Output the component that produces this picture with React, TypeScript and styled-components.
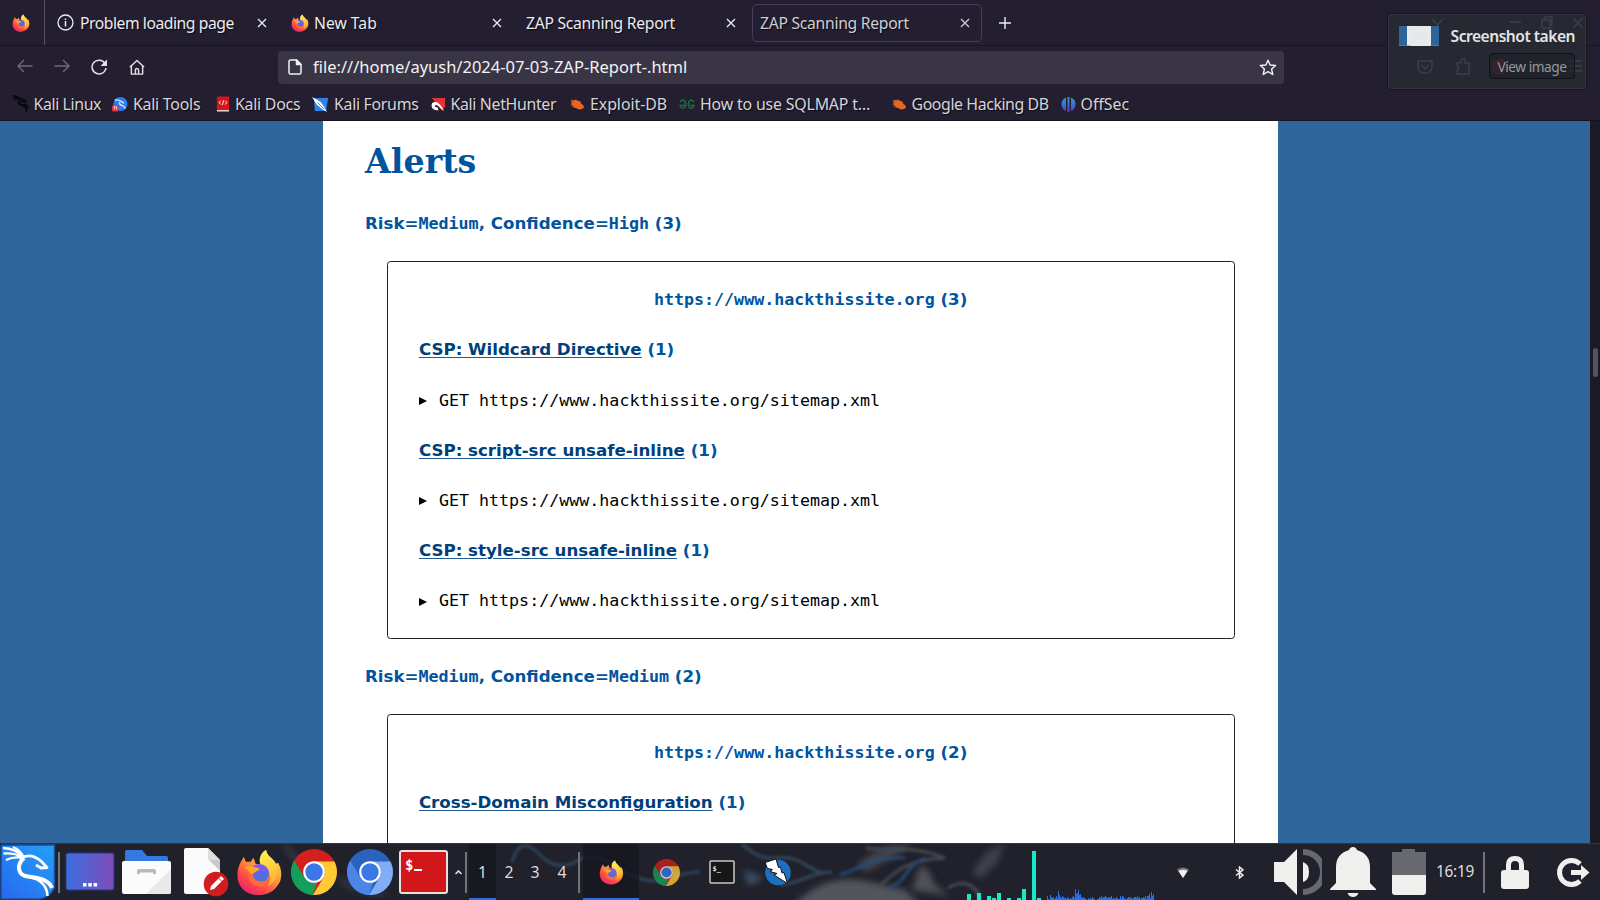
import React from "react";
import styled, { createGlobalStyle } from "styled-components";

const Global = createGlobalStyle`
  * { box-sizing: border-box; }
  body { margin: 0; overflow: hidden; background: #241f31; font-family: "Noto Sans", sans-serif; }
`;
const Screen = styled.div`
  width: 1600px; height: 900px; display: flex; flex-direction: column; overflow: hidden; position: relative;
`;

/* ---------- browser chrome ---------- */
const TabBar = styled.div`
  height: 46px; flex: none; display: flex; background: #241f30; border-bottom: 1px solid #17141f; align-items: center;
`;
const PinnedTab = styled.div`
  width: 45px; height: 45px; border-right: 1px solid #56525f; display: flex; align-items: center; padding-left: 12px;
`;
const Tab = styled.div<{ $w: number; $pad: number; $end?: number; $active?: boolean }>`
  width: ${(p) => p.$w}px; height: 38px; padding-left: ${(p) => p.$pad}px; padding-right: ${(p) => p.$end ?? 11}px;
  display: flex; align-items: center; color: ${(p) => (p.$active ? "#cfcdd3" : "#ecebee")};
  border: 1px solid ${(p) => (p.$active ? "#4a3a5e" : "transparent")}; border-radius: 5px;
`;
const TabTitle = styled.span<{ $gap?: number; $ls?: number }>`
  flex: 1; font-size: 15.7px; line-height: 22px; white-space: nowrap; margin-left: ${(p) => p.$gap ?? 0}px;
  letter-spacing: ${(p) => p.$ls ?? 0}px; text-shadow: 1px 1px 1px #0c0a12;
`;
const NewTab = styled.div`width: 46px; display: flex; justify-content: center;`;

const NavBar = styled.div`
  height: 43px; flex: none; display: flex; align-items: center; background: #241f30; padding-bottom: 1px;
`;
const NavButton = styled.div<{ $dim?: boolean }>`
  width: 37.5px; display: flex; justify-content: center; color: #e4e2e8; opacity: ${(p) => (p.$dim ? 0.38 : 1)};
`;
const NavButtons = styled.div`display: flex; padding-left: 6px;`;
const UrlBar = styled.div`
  margin-left: 122px; width: 1006px; height: 33px; border-radius: 4px; background: #3a3545; color: #f2f1f5;
  display: flex; align-items: center; padding: 0 7px 0 10px;
`;
const UrlText = styled.span`flex: 1; margin-left: 11px; font-size: 16.5px; line-height: 24px; white-space: nowrap;`;

const Bookmarks = styled.div`
  height: 32px; flex: none; display: flex; align-items: center; background: #241f30; border-bottom: 1px solid #16131d;
  padding: 0 0 1px 11.5px;
`;
const Bookmark = styled.div<{ $w: number }>`
  width: ${(p) => p.$w}px; flex: none; display: flex; align-items: center; gap: 5px; white-space: nowrap;
`;
const BookmarkLabel = styled.span<{ $ls: number }>`
  color: #d6d4da; font-size: 15.9px; line-height: 22px; letter-spacing: ${(p) => p.$ls}px; text-shadow: 1px 1px 1px #0c0a12;
`;

/* ---------- report page ---------- */
const Viewport = styled.div`height: 722px; flex: none; display: flex; background: #30669b; overflow: hidden;`;
const Report = styled.main`
  margin-left: 323px; width: 954.5px; background: #fff; padding: 0 42px; color: #00549e; overflow: hidden;
  font-family: "DejaVu Sans", sans-serif; font-size: 16.66px;
`;
const Title = styled.h1`
  margin: 0; padding-top: 20px; height: 78px; font: bold 33.3px/42px "DejaVu Serif", serif;
`;
const GroupTitle = styled.h2`margin: 0; height: 50px; font-size: 16.66px; line-height: 50px; white-space: nowrap;`;
const GroupGap = styled.div<{ $h: number }>`height: ${(p) => p.$h}px;`;
const Code = styled.code`font-family: "DejaVu Sans Mono", monospace; font-size: 16.66px;`;
const Card = styled.section<{ $h?: number }>`
  margin-left: 21.5px; width: 848.5px; border: 1px solid #222; border-radius: 3.5px; padding: 13px 31.7px 12px 31.4px;
  height: ${(p) => (p.$h ? p.$h + "px" : "auto")};
`;
const Line = styled.div<{ $center?: boolean }>`
  height: 50.2px; line-height: 50.2px; white-space: nowrap; font-weight: bold;
  text-align: ${(p) => (p.$center ? "center" : "left")};
`;
const AlertLink = styled.a`
  color: #003f7a; text-decoration: underline #1d5a96; text-decoration-thickness: 1px; text-underline-offset: 1.5px;
`;
const Request = styled.div`height: 50.2px; line-height: 50.2px; display: flex; align-items: center; color: #000; gap: 12px; padding-top: 0.6px;`;
const ScrollTrack = styled.div`margin-left: auto; width: 10px; background: #1c1b25; padding: 227px 0 0 2.5px;`;
const ScrollThumb = styled.div`width: 5px; height: 29px; border-radius: 3px; background: #54525d;`;

/* ---------- notification ---------- */
const Toast = styled.div`
  position: absolute; left: 1387px; top: 13px; width: 200px; height: 77px; border-radius: 4px; background: #262932;
  border: 1px solid #16161d; box-shadow: inset 0 0 0 1px #343640; padding: 8px 11px 10px 11px;
  display: flex; flex-direction: column; align-items: flex-end; justify-content: space-between;
`;
const Ghosts = styled.svg`position: absolute; left: 0; top: 0;`;
const ToastHead = styled.div`display: flex; align-items: center; width: 100%; justify-content: space-between; position: relative; height: 28px;`;
const ToastTitle = styled.span`font-size: 15.6px; letter-spacing: -0.5px; font-weight: 600; color: #e4e4e6; white-space: nowrap; padding-bottom: 1px;`;
const ToastButton = styled.div`
  position: relative; width: 86px; height: 26px; border: 1px solid #111219; border-radius: 4px; background: rgba(30, 31, 39, 0.55);
  color: #96979c; font-size: 13.7px; letter-spacing: -0.45px; line-height: 25px; text-align: center; white-space: nowrap;
`;

/* ---------- desktop panel ---------- */
const Panel = styled.div`
  height: 57px; flex: none; display: flex; background: #20212a; position: relative; border-top: 1px solid #34353e;
`;
const Wallpaper = styled.svg`position: absolute; left: 0; top: 0;`;
const Cell = styled.div<{ $w: number; $active?: boolean; $align?: string }>`
  width: ${(p) => p.$w}px; height: 56px; flex: none; position: relative; display: flex; align-items: center;
  justify-content: ${(p) => p.$align ?? "center"};
  background: ${(p) => (p.$active ? "rgba(20,21,30,.75)" : "transparent")};
  border-bottom: ${(p) => (p.$active ? "2px solid #2f6fe4" : "0")};
  padding-top: ${(p) => (p.$active ? "2px" : "0")};
  > svg { flex: none; }
`;
const Divider = styled.div<{ $m: string }>`position: relative; flex: none; width: 2px; height: 41px; margin: ${(p) => p.$m}; background: #73747a;`;
const PanelText = styled.span<{ $size: number; $ls?: number }>`
  font-size: ${(p) => p.$size}px; letter-spacing: ${(p) => p.$ls ?? 0}px; color: #dcdcde; line-height: 24px; white-space: nowrap; padding-bottom: 1px;
`;

const Fox = ({ s }: { s: number }) => (
  <svg width={s} height={s} viewBox="0 0 46 48">
    <defs>
      <linearGradient id="foxBody" x1=".85" y1=".1" x2=".25" y2="1">
        <stop offset="0" stopColor="#ffe14a" /><stop offset=".4" stopColor="#ff9a36" /><stop offset=".72" stopColor="#ff4a46" /><stop offset="1" stopColor="#e9246f" />
      </linearGradient>
      <linearGradient id="foxTail" x1=".4" y1="0" x2=".6" y2="1"><stop offset="0" stopColor="#fff14f" /><stop offset="1" stopColor="#ffab33" /></linearGradient>
      <linearGradient id="foxGlobe" x1="0" y1="0" x2="0" y2="1"><stop offset="0" stopColor="#8158ee" /><stop offset="1" stopColor="#3a78df" /></linearGradient>
    </defs>
    <path d="M4 13 L7 8 L9 13 L14 13 L17 9 L19 15 L24 16 C23 9 26 3 30 1 C31 8 36 9 40 15 L42 14 C46 21 47 31 41 38 C33 49 15 50 6 41 C-1 34-1 22 4 13Z" fill="url(#foxBody)" />
    <path d="M29 1 C21 7 22 16 27 19 C35 22 36 31 31 38 C43 33 45 18 35 9 C31 6 30 4 29 1Z" fill="url(#foxTail)" />
    <circle cx="23" cy="25" r="9.8" fill="url(#foxGlobe)" />
    <path d="M7 19 C13 15 18 19 23 20 C23 22 19 23 17 24 C15 29 19 33 25 33 C30 33 33 30 33 26 C37 37 24 42 15 35 C10 31 10 24 13 21Z" fill="#ff683a" />
    <path d="M7 19 C13 16 19 19 23 20 C22 23 18 23 15 26 C13 24 11 21 7 19Z" fill="#ffa52f" />
  </svg>
);
const ChromeIcon = ({ s, c = ["#d2201c", "#13a05b", "#ffca34"], dim }: { s: number; c?: string[]; dim?: boolean }) => (
  <svg width={s} height={s} viewBox="0 0 46 46" opacity={dim ? 0.78 : 1}>
    <circle cx="23" cy="23" r="23" fill={c[0]} />
    <path d="M3.1 11.5 L13.5 28.5 A11 11 0 0 0 26 33.5 L22 46 A23 23 0 0 1 3.1 11.5Z" fill={c[1]} />
    <path d="M23 12.5 H43.4 A23 23 0 0 1 22 46 L32.5 28.5 A11 11 0 0 0 23 12.5Z" fill={c[2]} />
    <circle cx="23" cy="23" r="10.8" fill="#fff" /><circle cx="23" cy="23" r="8.7" fill="#3b78e6" />
  </svg>
);
const Cross = () => (
  <svg width="10" height="10" viewBox="0 0 10 10"><path d="M1 1 9 9M9 1 1 9" stroke="currentColor" strokeWidth="1.3" /></svg>
);
const BugIcon = () => (
  <svg width="16" height="13" viewBox="0 0 15 13"><path d="M2 1.500 4.500 2.500 6.500 1.500 9 3 11 3.500 11.500 5.500 14 7.500 14.500 9.500 12.500 11 9.500 11.500 6.500 10 4 9.500 3.500 8 1.500 6.500 2 4.500Z" fill="#e8661f" /><path d="M1.500 8.500 4 8M5.500 1 7 2.500M1 3.500 3 4.500" stroke="#8f3d16" /></svg>
);

const bookmarks: { label: string; w: number; ls: number; icon: React.ReactNode }[] = [
  { label: "Kali Linux", w: 99.5, ls: -0.4, icon: <svg width="17" height="18" viewBox="0 0 54 60"><g fill="none" stroke="#08070a" strokeWidth="5"><path d="M2 3 C11 1 19 7 24 13 C30 11 40 16 46 22 C40 23 34 22 31 21 C23 18 18 25 23 30 C32 32 49 29 50 49" /><path d="M3 8 C12 6 18 9 24 14M6 15 C13 11 18 12 25 15M23 30 C30 37 45 32 47 59M40 31 C46 33 51 36 52 43" /></g></svg> },
  { label: "Kali Tools", w: 105, ls: -0.25, icon: <svg width="17" height="18" viewBox="0 0 18 18"><circle cx="10" cy="9" r="7.5" fill="#2f7bed" /><path d="M4 5 C9 3 10 7 14 8 M9 7 C8 12 14 9 15 14" stroke="#dcebff" fill="none" strokeWidth="1.4" /><rect x="1" y="10" width="7" height="7" rx="2" fill="#e23135" /><path d="M3 12h3M3.5 12v3M6 12v3" stroke="#fff" strokeWidth=".8" /></svg> },
  { label: "Kali Docs", w: 96, ls: -0.25, icon: <svg width="14" height="18" viewBox="0 0 15 18"><path d="M1 2 2 1H14V17H1Z" fill="#d3151c" /><path d="M1 15.5H14V17H1Z" fill="#ddd" /><path d="M5 5.5 3.5 7.5 5 9.5M10 5.5 11.500 7.500 10 9.500M8.300 5 6.800 10" stroke="#fff" fill="none" /></svg> },
  { label: "Kali Forums", w: 117.500, ls: -0.3, icon: <svg width="17" height="17" viewBox="0 0 18 18"><path d="M2 2H17L15 16H3Z" fill="#2b83f2" /><path d="M0 1 9 6 12 10 16 17 11 14 5 9Z" fill="#fff" /><path d="M6 7 13 14" stroke="#333" strokeWidth=".7" /></svg> },
  { label: "Kali NetHunter", w: 139.500, ls: -0.35, icon: <svg width="16" height="17" viewBox="0 0 17 18"><path d="M2 2H16V11L13 16Z" fill="#e43238" /><path d="M15 16 C11 8 7 5 3 7 C0 10 2 16 9 15 L8 12 C5 12 4 10 7 9.500 C10 11 12 14 15 16Z" fill="#fff" /></svg> },
  { label: "Exploit-DB", w: 110, ls: -0.05, icon: <BugIcon /> },
  { label: "How to use SQLMAP t…", w: 211.500, ls: -0.18, icon: <svg width="16" height="11" viewBox="0 0 17 12" fill="none" stroke="#18733c" strokeWidth="1.5"><path d="M1 3.500 C3-.5 7 1 7 6 C7 11 2 11 1 7H7M16 3.500 C14-.5 10 1 10 6 C10 11 15 11 16 7H12" /></svg> },
  { label: "Google Hacking DB", w: 170, ls: -0.42, icon: <BugIcon /> },
  { label: "OffSec", w: 80, ls: 0, icon: <svg width="15" height="17" viewBox="0 0 15 17"><defs><linearGradient id="os" x1="0" y1="0" x2="0" y2="1"><stop offset="0" stopColor="#20a7c4" /><stop offset="1" stopColor="#6533dc" /></linearGradient></defs><path d="M5 1.500 A8 7.500 0 0 0 5 15ZM10 1.500 A8 7.500 0 0 1 10 15ZM6.500 1H8.500V16H6.500Z" fill="url(#os)" /></svg> },
];

const AlertRow = ({ name }: { name: string }) => <Line><AlertLink>{name}</AlertLink> (1)</Line>;
const RequestRow = () => (
  <Request>
    <svg width="8" height="8" viewBox="0 0 8 8"><path d="M0 0 8 4 0 8Z" /></svg>
    <Code>GET https://www.hackthissite.org/sitemap.xml</Code>
  </Request>
);

const tealBars: [number, number][] = [[968, 6], [978, 7], [988, 4], [993, 2], [998, 7], [1008, 2], [1018, 2], [1023, 11], [1033, 49], [1038, 2]];
const blueBars = [4, 1, 0, 5, 3, 2, 3, 1, 2, 4, 2, 9, 5, 3, 2, 4, 3, 2, 2, 1, 3, 2, 1, 2, 1, 3, 4, 2, 11, 6, 7, 10, 5, 6, 3, 2, 3, 2, 1, 1, 0, 2, 1, 2, 1, 3, 2, 1, 0, 0, 1, 1, 3, 2, 4, 2, 3, 3, 4, 3, 2, 3, 2, 3, 4, 1, 2, 2, 1, 3, 2, 1, 1, 4, 2, 4, 3, 2, 1, 1, 2, 3, 3, 2, 3, 1, 2, 3, 3, 2, 4, 2, 3, 1, 2, 2, 3, 2, 4, 1, 4, 4, 6, 2, 8, 4, 6];

export default function App() {
  return (
    <Screen>
      <Global />
      <TabBar>
        <PinnedTab><Fox s={18} /></PinnedTab>
        <Tab $w={235} $pad={11} $end={12}>
          <svg width="17" height="17" viewBox="0 0 17 17"><circle cx="8.500" cy="8.500" r="7.500" fill="none" stroke="currentColor" strokeWidth="1.300" /><path d="M8.500 7V12.500M8.500 4.500V6" stroke="currentColor" strokeWidth="1.500" /></svg>
          <TabTitle $gap={6} $ls={-0.45}>Problem loading page</TabTitle><Cross />
        </Tab>
        <Tab $w={234} $pad={10}><Fox s={18} /><TabTitle $gap={5}>New Tab</TabTitle><Cross /></Tab>
        <Tab $w={238} $pad={11} $end={15}><TabTitle $ls={-0.28}>ZAP Scanning Report</TabTitle><Cross /></Tab>
        <Tab $w={229.5} $pad={7} $active><TabTitle $ls={-0.28}>ZAP Scanning Report</TabTitle><Cross /></Tab>
        <NewTab><svg width="14" height="14" viewBox="0 0 14 14"><path d="M7 1V13M1 7H13" stroke="#efeef2" strokeWidth="1.400" /></svg></NewTab>
      </TabBar>
      <NavBar>
        <NavButtons>
          <NavButton $dim><svg width="16" height="14" viewBox="0 0 16 14" fill="none" stroke="currentColor" strokeWidth="1.400"><path d="M15.500 7H1.500M7 1 1 7 7 13" /></svg></NavButton>
          <NavButton $dim><svg width="16" height="14" viewBox="0 0 16 14" fill="none" stroke="currentColor" strokeWidth="1.400"><path d="M.5 7H14.500M9 1 15 7 9 13" /></svg></NavButton>
          <NavButton><svg width="17" height="16" viewBox="0 0 17 16"><path d="M14 4.500 A7 6.800 0 1 0 15 9" fill="none" stroke="currentColor" strokeWidth="1.500" /><path d="M16 .5V7H9.500Z" fill="currentColor" /></svg></NavButton>
          <NavButton><svg width="16" height="17" viewBox="0 0 17 17" fill="none" stroke="currentColor" strokeWidth="1.500" strokeLinejoin="round"><path d="M1 8 8.500 1 16 8M2.500 7V15.500H14.500V7M6.800 15V11.500Q6.800 9.500 8.500 9.500T10.200 11.500V15" /></svg></NavButton>
        </NavButtons>
        <UrlBar>
          <svg width="14" height="16" viewBox="0 0 14 16" fill="none" stroke="currentColor" strokeWidth="1.500" strokeLinejoin="round"><path d="M2.500 1H8.500L13 5.500V13.500Q13 15 11.500 15H2.500Q1 15 1 13.500V2.500Q1 1 2.500 1Z" /><path d="M8.500 1V5.500H13Z" fill="currentColor" /></svg>
          <UrlText>file:///home/ayush/2024-07-03-ZAP-Report-.html</UrlText>
          <svg width="18" height="17" viewBox="0 0 18 17"><path d="M9 1.200 11.100 6 16.600 6.500 12.600 10 13.800 15.500 9 12.700 4.200 15.500 5.400 10 1.400 6.500 6.900 6Z" fill="none" stroke="currentColor" strokeWidth="1.400" strokeLinejoin="round" /></svg>
        </UrlBar>
      </NavBar>
      <Bookmarks>
        {bookmarks.map((b) => <Bookmark key={b.label} $w={b.w}>{b.icon}<BookmarkLabel $ls={b.ls}>{b.label}</BookmarkLabel></Bookmark>)}
      </Bookmarks>

      <Viewport>
        <Report>
          <Title>Alerts</Title>
          <GroupTitle>Risk=<Code>Medium</Code>, Confidence=<Code>High</Code> (3)</GroupTitle>
          <GroupGap $h={12} />
          <Card>
            <Line $center><Code>https://www.hackthissite.org</Code> (3)</Line>
            <AlertRow name="CSP: Wildcard Directive" /><RequestRow />
            <AlertRow name="CSP: script-src unsafe-inline" /><RequestRow />
            <AlertRow name="CSP: style-src unsafe-inline" /><RequestRow />
          </Card>
          <GroupGap $h={12.8} />
          <GroupTitle>Risk=<Code>Medium</Code>, Confidence=<Code>Medium</Code> (2)</GroupTitle>
          <GroupGap $h={12} />
          <Card $h={180}>
            <Line $center><Code>https://www.hackthissite.org</Code> (2)</Line>
            <AlertRow name="Cross-Domain Misconfiguration" />
          </Card>
        </Report>
        <ScrollTrack><ScrollThumb /></ScrollTrack>
      </Viewport>

      <Panel>
        <Wallpaper width="1600" height="56" viewBox="0 844 1600 56">
          <defs>
            <filter id="soft" x="-20%" y="-50%" width="140%" height="200%"><feGaussianBlur stdDeviation="1.500" /></filter>
            <filter id="softer" x="-20%" y="-50%" width="140%" height="200%"><feGaussianBlur stdDeviation="3" /></filter>
          </defs>
          <g filter="url(#softer)">
            <path d="M790 910 C810 886 835 874 870 882 L905 890 925 910Z" fill="#53545d" />
            <path d="M856 866 C872 850 890 844 912 844 L892 858 866 872Z" fill="#42444e" />
            <path d="M920 866 C936 870 926 886 952 896 L912 890Z" fill="#4f5059" />
            <path d="M972 874 C982 852 992 848 1004 844 L998 862 982 878Z" fill="#3d3f49" />
            <path d="M744 870 L764 878 748 886Z" fill="#3d5068" />
            <path d="M286 845 Q294 860 306 868M340 880 Q365 895 386 892" stroke="#353a47" strokeWidth="5" fill="none" />
          </g>
          <g fill="none" filter="url(#soft)">
            <path d="M512 862 C520 838 530 844 542 857 C554 868 568 868 582 858 C610 850 620 880 655 881 C670 880 680 872 700 872" stroke="#304a66" strokeWidth="2.500" />
            <path d="M742 844 C752 852 760 860 775 858 C800 854 810 872 824 873 M780 885 C800 884 810 872 832 872" stroke="#33475f" strokeWidth="3" />
            <path d="M880 886 C894 872 906 860 945 858 M866 848 C886 852 912 844 945 858 M948 888 C965 878 976 886 980 898" stroke="#454853" strokeWidth="3" />
            <path d="M840 875 C862 868 874 856 905 858 M890 888 C908 880 906 864 926 858" stroke="#264a75" strokeWidth="3" />
          </g>
        </Wallpaper>
        <Cell $w={57}>
          <svg width="57" height="56" viewBox="0 0 57 56">
            <defs><linearGradient id="kali" x1="1" y1="0" x2="0" y2="1"><stop offset="0" stopColor="#22a1f7" /><stop offset="1" stopColor="#2867f0" /></linearGradient></defs>
            <path d="M2 1H54.500V44Q50 53 40 55H1V2Z" fill="url(#kali)" stroke="#1f4d96" strokeWidth="1.500" />
            <g fill="none" stroke="#fff" strokeLinejoin="round">
              <path d="M3 4C11 4.500 17 6 22 12M3.500 9.500C11 9 17 10 22 13M6 16C12 13 18 13 23 14M13 3Q20 6 23 12" strokeWidth="2.400" />
              <path d="M20 15C28 9 36 13 41 17L47 23.500 41 24 36 21" strokeWidth="2.800" />
              <path d="M24 14C15 22 19 32 28 32.500C40 34 49 36 52 44" strokeWidth="4" />
              <path d="M30 33C42 36 47 42 47.500 52" strokeWidth="2.500" />
            </g>
          </svg>
        </Cell>
        <Divider $m="8px 2px 0 1px" />
        <Cell $w={56}><svg width="50" height="40" viewBox="0 0 50 40"><defs><linearGradient id="desk"><stop stopColor="#3c6fe0" /><stop offset="1" stopColor="#7e4bb8" /></linearGradient></defs><rect x="1" y="1" width="48" height="37" rx="2" fill="url(#desk)" stroke="#233b8e" /><path d="M18 31h3.500v3.500H18zM23.300 31h3.500v3.500h-3.500zM28.600 31h3.500v3.500h-3.500z" fill="#fff" /></svg></Cell>
        <Cell $w={56}><svg width="49" height="46" viewBox="0 0 49 46"><path d="M3 11V3Q3 1 5 1H20L25 7H44Q46 7 46 9V15H3Z" fill="#3478e2" /><rect y="12" width="49" height="33" rx="2" fill="#fbfbfb" /><path d="M49 20V43Q49 45 47 45H24Z" fill="#e9e9ea" /><path d="M15 25V22Q15 20 17 20H32Q34 20 34 22V25H31V23.500H18V25Z" fill="#b9b9bb" /></svg></Cell>
        <Cell $w={63}><svg width="46" height="50" viewBox="0 0 46 50"><path d="M1 3Q1 1 3 1H25L37 13V47H3Q1 47 1 45Z" fill="#fbfbfc" /><path d="M26 13H37V24Z" fill="#c9c9cb" /><path d="M25 1 37 13H25Z" fill="#dededf" /><circle cx="33" cy="37" r="12.300" fill="#d31c1f" /><path d="M27 43 28 39 35.500 31.500 38.500 34.500 31 42Z" fill="#fff" /><path d="M37 30 40 33" stroke="#fff" strokeWidth="3" /></svg></Cell>
        <Cell $w={44}><Fox s={47} /></Cell>
        <Cell $w={65}><ChromeIcon s={46} /></Cell>
        <Cell $w={47}><ChromeIcon s={46} c={["#2a63be", "#4b86e6", "#80adf5"]} /></Cell>
        <Cell $w={62}><svg width="50" height="44" viewBox="0 0 50 44"><rect x="1" y="1" width="47" height="42" rx="2" fill="#d2171b" stroke="#efdede" strokeWidth="2" /><text x="6" y="20" fill="#fff" fontFamily="DejaVu Sans Mono" fontWeight="bold" fontSize="14">$</text><path d="M15 20H23" stroke="#fff" strokeWidth="2" /></svg></Cell>
        <Cell $w={11} $align="flex-start"><svg width="7" height="5" viewBox="0 0 7 5"><path d="M.5 4 3.500 1 6.500 4" fill="none" stroke="#e8e8ea" strokeWidth="1.500" /></svg></Cell>
        <Divider $m="8px 2px 0 -1px" />
        <Cell $w={27} $active><PanelText $size={15.800}>1</PanelText></Cell>
        <Cell $w={26}><PanelText $size={15.800}>2</PanelText></Cell>
        <Cell $w={26}><PanelText $size={15.800}>3</PanelText></Cell>
        <Cell $w={28}><PanelText $size={15.800}>4</PanelText></Cell>
        <Divider $m="8px 3px 0 2px" />
        <Cell $w={56} $active><Fox s={25} /></Cell>
        <Cell $w={55}><ChromeIcon s={27} dim /></Cell>
        <Cell $w={56}><svg width="26" height="24" viewBox="0 0 26 24"><rect x="1" y="1" width="24" height="22" rx="1" fill="#161719" stroke="#c9c9c6" strokeWidth="1.500" /><text x="3.500" y="10.500" fill="#e0e0df" fontFamily="DejaVu Sans Mono" fontWeight="bold" fontSize="7">$_</text></svg></Cell>
        <Cell $w={56}><svg width="28" height="28" viewBox="0 0 28 28"><circle cx="14" cy="14.500" r="12.800" fill="#1d6fc0" /><path d="M1 4.500 12 1 14.500 9.500 16.500 9 18 15 20 14.500 23.500 25.500 10 17 13 15.500 6 13.500 8.500 11.500 3.500 10.500Z" fill="#fff" stroke="#111" strokeWidth="1" /></svg></Cell>
        <Cell $w={361}>
          <svg width="361" height="56" viewBox="807 0 361 56">
            {tealBars.map(([x, h]) => <rect key={x} x={x} y={56 - h} width="4" height={h} fill="#17e9cd" />)}
            {blueBars.map((h, i) => <rect key={i} x={1048 + i} y={56 - h} width="1" height={h} fill="#2a6fe0" />)}
          </svg>
        </Cell>
        <Cell $w={32}><svg width="12" height="11" viewBox="0 0 12 11"><path d="M0 2.500Q6-1.500 12 2.500L6 11Z" fill="#75767b" /><path d="M1.500 4Q6 1.500 10.500 4L6 11Z" fill="#f0f0ef" /></svg></Cell>
        <Cell $w={80}><svg width="9" height="13" viewBox="0 0 9 13"><path d="M1 3.500 8 9.200 4.500 12V1L8 3.800 1 9.500" fill="none" stroke="#ececeb" strokeWidth="1.500" /></svg></Cell>
        <Cell $w={37}><svg width="48" height="46" viewBox="0 0 48 46"><path d="M0 13H10L23 0V46L10 33H0Z" fill="#efefed" /><path d="M29 13Q35 15 35 23T29 33Z" fill="#efefed" /><path d="M29 3A20 20 0 0 1 29 43" fill="none" stroke="#68696e" strokeWidth="6" /></svg></Cell>
        <Cell $w={74}><svg width="46" height="50" viewBox="0 0 46 50"><path d="M0 42 6 36V20Q6 7 19 3Q20 0 23 0T27 3Q40 7 40 20V36L46 42V43H0ZM17.500 46H28.500Q27 50 23 50T17.500 46Z" fill="#efefed" /></svg></Cell>
        <Cell $w={37}><svg width="34" height="46" viewBox="0 0 34 46"><path d="M0 26V3H10V0H23V3H34V26Z" fill="#68696e" /><path d="M0 26H34V43Q34 46 31 46H3Q0 46 0 43Z" fill="#efefed" /></svg></Cell>
        <Cell $w={56}><PanelText $size={15.400} $ls={-0.3}>16:19</PanelText></Cell>
        <Divider $m="8px 0 0 0" />
        <Cell $w={60}><svg width="28" height="33" viewBox="0 0 28 33"><path d="M7.500 15V9Q7.500 2.500 14 2.500T20.500 9V15" fill="none" stroke="#efefed" strokeWidth="5" /><rect y="14" width="28" height="19" rx="3" fill="#efefed" /></svg></Cell>
        <Cell $w={56}><svg width="33" height="29" viewBox="0 0 33 29"><path d="M23 6A12 12 0 1 0 23 23" fill="none" stroke="#efefed" strokeWidth="5" /><path d="M14 12H24V7L32.500 14.500 24 22V17H14Z" fill="#efefed" /></svg></Cell>
      </Panel>

      <Toast>
        <Ghosts width="198" height="75" viewBox="1388 14 198 75" fill="none" stroke="#3c3f49" strokeWidth="1.500">
          <path d="M1432 19 1437.500 25 1443 19M1510 22H1521M1542 20H1550V28H1542ZM1545 20V17H1552V25H1550M1573 18 1583 28M1583 18 1573 28M1570 61H1582M1570 66H1582M1570 71H1582" />
          <path d="M1418 61H1432V67Q1432 73 1425 73T1418 67ZM1421 65 1425 69 1429 65M1457 74V70Q1461 68 1457 66V63H1461Q1460 59 1463 59T1465 63H1469V74Z" />
          <circle cx="1500" cy="67" r="7" stroke="#6a2c38" fill="#4c2630" /><circle cx="1539" cy="67" r="6" fill="#343740" stroke="none" />
        </Ghosts>
        <ToastHead>
          <svg width="40" height="20" viewBox="0 0 40 20"><rect width="40" height="20" fill="#2e6499" /><rect x="8" width="24" height="20" fill="#e8eaed" /><path d="M11 4H18M12 7H28M12 10H25M12 13H28M11 16H20" stroke="#dde1e7" strokeWidth=".7" /><path d="M0 20H12M31 20H40" stroke="#8d8796" strokeWidth="1" /></svg>
          <ToastTitle>Screenshot taken</ToastTitle>
        </ToastHead>
        <ToastButton>View image</ToastButton>
      </Toast>
    </Screen>
  );
}
